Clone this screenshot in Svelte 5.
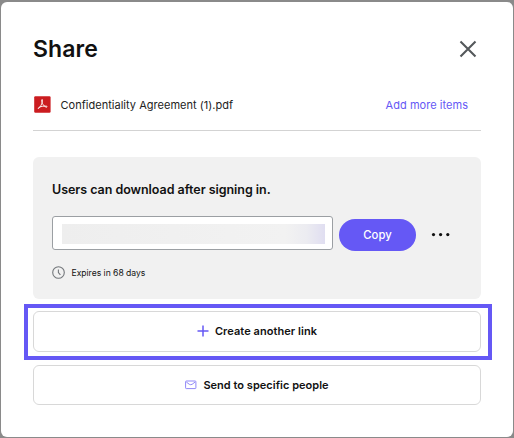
<script>
  const expiryDays = 68;
  const fileName = 'Confidentiality Agreement (1).pdf';
</script>

<div class="backdrop">
  <section class="dialog">
    <header>
      <h1>Share</h1>
      <button class="close" aria-label="Close">
        <svg width="18" height="18" viewBox="0 0 18 18"><path d="M1.500 1.500 16.500 16.500M16.500 1.500 1.500 16.500" fill="none" stroke="#54585b" stroke-width="2.100" /></svg>
      </button>
    </header>

    <div class="file">
      <svg width="17" height="17" viewBox="0 0 17 17">
        <rect x=".2" y=".3" width="16.400" height="16.400" rx="1.200" fill="#cb1c20" />
        <path d="M8 3.400c-.6.600-.3 2.600.5 4.200.8 1.600 2.200 3.200 3.900 3.600.9.200 1-.8.100-1-2.200-.3-5.300.1-7.400 1.100-1.400.8-1.100 1.700-.2 1 1.200-1.100 2.800-3.900 3.300-6 .3-1.500.4-2.800-.2-2.900Z" fill="none" stroke="#fff" stroke-width=".9" />
      </svg>
      <span class="name">{fileName}</span>
      <button class="add">Add more items</button>
    </div>

    <div class="panel">
      <h2>Users can download after signing in.</h2>
      <div class="link-row">
        <div class="field"><div class="masked"></div></div>
        <button class="copy"><span>Copy</span></button>
        <button class="more" aria-label="More options">
          <svg width="20" height="4" viewBox="0 0 20 4"><g fill="#111"><circle cx="2.500" cy="1.600" r="1.600" /><circle cx="9.600" cy="1.600" r="1.600" /><circle cx="16.800" cy="1.600" r="1.600" /></g></svg>
        </button>
      </div>
      <div class="expiry">
        <svg width="13" height="13" viewBox="0 0 13 13" fill="none" stroke="#73777b"><circle cx="6.500" cy="6.500" r="5.800" stroke-width="1.100" /><path d="M6.400 3.400v3.200l2 2.300" stroke-width="1.100" /></svg>
        <span>Expires in {expiryDays} days</span>
      </div>
    </div>

    <div class="highlight">
      <button class="action create">
        <svg width="12" height="12" viewBox="0 0 12 12"><path d="M6 .5v11M.5 6h11" stroke="#6558f5" stroke-width="1.500" /></svg>
        <span>Create another link</span>
      </button>
    </div>
    <button class="action send">
      <svg width="12" height="10" viewBox="0 0 12 10" fill="none" stroke="#9087f7"><rect x=".6" y="1" width="10.300" height="7.600" rx=".7" /><path d="m1.300 2 3 2.300q1.400.8 2.800 0l3-2.300" /></svg>
      <span>Send to specific people</span>
    </button>
  </section>
</div>

<style>
  :global(body) { margin: 0; }
  .backdrop {
    box-sizing: border-box;
    width: 514px;
    height: 438px;
    padding: 2px 1px 1px;
    background: #8a8a8a;
    font-family: Inter, "Liberation Sans", sans-serif;
    color: #111;
  }
  .dialog {
    box-sizing: border-box;
    height: 435px;
    padding: 0 32px;
    background: #fff;
    border-radius: 6px;
    overflow: hidden;
  }
  button {
    padding: 0;
    border: 0;
    background: none;
    font: inherit;
    color: inherit;
  }
  svg { display: block; flex: none; }
  span, h1, h2 { white-space: nowrap; }
  header {
    display: flex;
    align-items: center;
    justify-content: space-between;
    box-sizing: border-box;
    height: 85px;
    padding: 8px 4px 0 0;
  }
  h1 { margin: 0; font-size: 23px; line-height: 28px; font-weight: 600; letter-spacing: .1px; }
  .file {
    display: flex;
    align-items: center;
    box-sizing: border-box;
    height: 44px;
    padding: 0 13px 8px 1px;
    border-bottom: 1px solid #d3d3d3;
  }
  .name { margin-left: 9.500px; padding-top: 1px; font-size: 11px; letter-spacing: .02px; color: #222; }
  .add { margin-left: auto; padding-top: 1px; font-size: 11px; letter-spacing: .04px; color: #6558f5; }
  .panel {
    box-sizing: border-box;
    height: 142px;
    margin-top: 26px;
    padding: 24px 19px 0;
    border-radius: 6px;
    background: #f1f1f1;
  }
  h2 { margin: 0; font-size: 12.500px; line-height: 17px; font-weight: 600; letter-spacing: -.04px; }
  .link-row { display: flex; height: 35px; margin-top: 18px; }
  .field {
    box-sizing: border-box;
    width: 281px;
    height: 34px;
    padding: 7px 7px 6px 9px;
    border: 1px solid #9b9fa3;
    border-radius: 3px;
    background: #fff;
  }
  .masked {
    height: 20px;
    background: linear-gradient(90deg, #eeeeee, #f2f2f2 85%, #ececf1 93%, #e0def1);
  }
  .copy {
    width: 77px;
    height: 32px;
    margin: 3px 0 0 6px;
    border-radius: 16px;
    background: #6558f5;
    color: #fff;
    font-size: 11.300px;
    font-weight: 500;
  }
  .more { height: 32px; margin: 3px 0 0 15px; }
  .expiry { display: flex; align-items: center; height: 13px; margin-top: 15px; gap: 6.500px; font-size: 8.600px; letter-spacing: -.02px; }
  .highlight {
    box-sizing: border-box;
    height: 56px;
    margin: 5px -11px 0 -9px;
    padding: 3px 7px 0 5px;
    border: 4px solid #6558f5;
  }
  .action {
    display: flex;
    align-items: center;
    justify-content: center;
    box-sizing: border-box;
    width: 448px;
    border: 1px solid #d8d8d8;
    border-radius: 6px;
    background: #fff;
    font-size: 11px;
    font-weight: 600;
  }
  .create { height: 41px; gap: 6px; padding-bottom: 1px; letter-spacing: .06px; }
  .send { height: 40px; gap: 6px; margin-top: 5px; padding-bottom: 1px; letter-spacing: .02px; }
</style>
